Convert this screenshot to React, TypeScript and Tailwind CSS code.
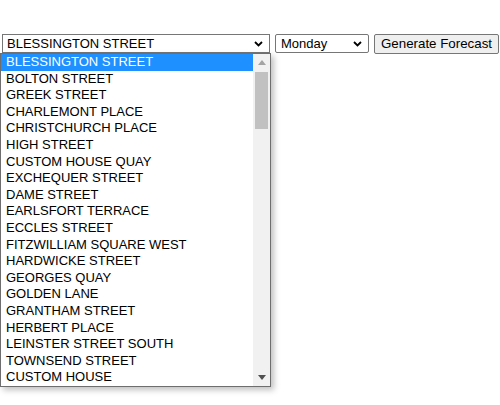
import React from "react";

const stations = [
  "BLESSINGTON STREET",
  "BOLTON STREET",
  "GREEK STREET",
  "CHARLEMONT PLACE",
  "CHRISTCHURCH PLACE",
  "HIGH STREET",
  "CUSTOM HOUSE QUAY",
  "EXCHEQUER STREET",
  "DAME STREET",
  "EARLSFORT TERRACE",
  "ECCLES STREET",
  "FITZWILLIAM SQUARE WEST",
  "HARDWICKE STREET",
  "GEORGES QUAY",
  "GOLDEN LANE",
  "GRANTHAM STREET",
  "HERBERT PLACE",
  "LEINSTER STREET SOUTH",
  "TOWNSEND STREET",
  "CUSTOM HOUSE",
];

const Chevron = () => (
  <svg width="9" height="6" viewBox="0 0 9 6" className="shrink-0">
    <path d="M1 1 L4.5 4.5 L8 1" fill="none" stroke="#000" strokeWidth="1.8" />
  </svg>
);

const App = () => {
  return (
    <div className="relative h-[405px] w-[500px] overflow-hidden bg-white font-['Liberation_Sans',Arial,sans-serif] text-[13px] text-black">
      {/* Controls row */}
      <div className="flex items-start gap-[5px] pl-[2px] pt-[34px]">
        <div className="flex h-[19px] w-[268px] items-center justify-between border border-[#767676] pl-[4px] pr-[6px]">
          <span>BLESSINGTON STREET</span>
          <Chevron />
        </div>
        <div className="flex h-[19px] w-[94px] items-center justify-between rounded-[2px] border border-[#767676] pl-[5px] pr-[6px]">
          <span>Monday</span>
          <Chevron />
        </div>
        <button className="flex h-[20px] w-[125px] items-center justify-center rounded-[2px] border border-[#767676] bg-[#efefef] text-[13.33px]">
          Generate Forecast
        </button>
      </div>

      {/* Open dropdown list */}
      <div className="absolute left-0 top-[53px] flex h-[334px] w-[271px] border border-[#6e6e6e] bg-white shadow-[3px_3px_6px_rgba(0,0,0,0.25)]">
        <div className="flex w-[252px] flex-col">
          {stations.map((s, i) => (
            <div
              key={s}
              className={
                i === 0
                  ? "h-[16.6px] whitespace-nowrap bg-[#1e90ff] pl-[5px] leading-[16.6px] text-white"
                  : "h-[16.6px] whitespace-nowrap pl-[5px] leading-[16.6px]"
              }
            >
              {s}
            </div>
          ))}
        </div>
        {/* Scrollbar */}
        <div className="flex w-[17px] flex-col items-center bg-[#f1f1f1]">
          <div className="flex h-[17px] w-full items-center justify-center">
            <svg width="8" height="5" viewBox="0 0 8 5">
              <path d="M0 5 L4 0 L8 5 Z" fill="#a3a3a3" />
            </svg>
          </div>
          <div className="mt-px h-[57px] w-[13px] bg-[#c1c1c1]" />
          <div className="flex-1" />
          <div className="flex h-[17px] w-full items-center justify-center">
            <svg width="8" height="5" viewBox="0 0 8 5">
              <path d="M0 0 L8 0 L4 5 Z" fill="#505050" />
            </svg>
          </div>
        </div>
      </div>
    </div>
  );
};

export default App;
